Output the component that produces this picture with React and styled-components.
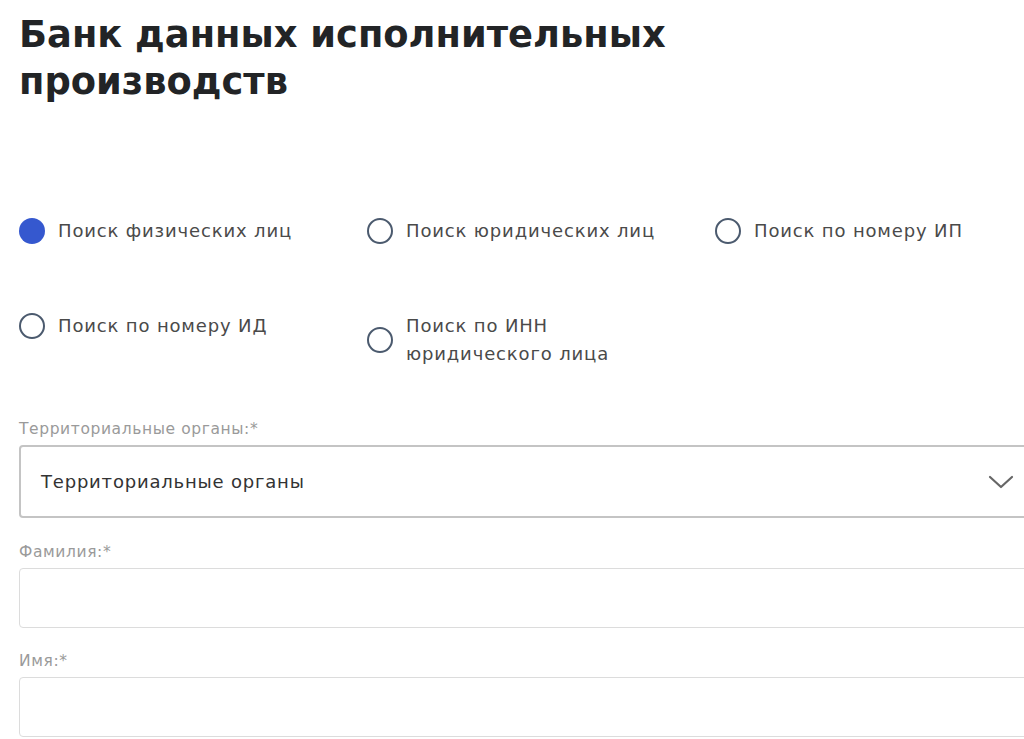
import React, { useState } from 'react';
import styled, { createGlobalStyle } from 'styled-components';

const GlobalStyle = createGlobalStyle`
  html, body {
    margin: 0;
    padding: 0;
    background: #fff;
    overflow: hidden;
  }
  body {
    font-family: "DejaVu Sans", Inter, sans-serif;
  }
`;

const Page = styled.div`
  box-sizing: border-box;
  padding: 11px 0 0 19px;
  width: 1040px;
`;

const Title = styled.h1`
  margin: 0;
  font-size: 36.8px;
  line-height: 47px;
  font-weight: 700;
  color: #222426;
`;

const Options = styled.div`
  display: grid;
  grid-template-columns: repeat(3, 348px);
  grid-auto-rows: 95px;
  margin-top: 101px;
  margin-bottom: 24px;
`;

const Option = styled.label`
  display: flex;
  align-items: center;
  gap: 13px;
  cursor: pointer;
  font-size: 18px;
  letter-spacing: 0.85px;
  line-height: ${(p) => (p.$multi ? '28px' : '29px')};
  color: #4a4a4a;
  margin-top: ${(p) => (p.$multi ? '11px' : '10px')};
  height: fit-content;
`;

const Circle = styled.span`
  flex: none;
  box-sizing: border-box;
  width: 26px;
  height: 26px;
  border-radius: 50%;
  border: ${(p) => (p.$on ? 'none' : '2px solid #4b5a6e')};
  background: ${(p) => (p.$on ? '#3558cf' : '#fff')};
`;

const Field = styled.div`
  display: flex;
  flex-direction: column;
  margin-top: ${(p) => p.$top || 0}px;
`;

const Label = styled.div`
  font-size: 15.5px;
  letter-spacing: 0.6px;
  line-height: 18px;
  color: #9a9a9a;
  margin-bottom: 7px;
`;

const SelectBox = styled.div`
  box-sizing: border-box;
  height: 73px;
  border: 2px solid #c4c4c4;
  border-radius: 4px;
  display: flex;
  align-items: center;
  justify-content: space-between;
  padding: 0 24px 0 20px;
  font-size: 18px;
  letter-spacing: 0.8px;
  color: #333;
`;

const Input = styled.input`
  box-sizing: border-box;
  height: 60px;
  border: 1.5px solid #dcdcdc;
  border-radius: 4px;
  outline: none;
  padding: 0 20px;
  font: inherit;
  font-size: 18px;
`;

const options = [
  { id: 'fl', text: 'Поиск физических лиц' },
  { id: 'ul', text: 'Поиск юридических лиц' },
  { id: 'ip', text: 'Поиск по номеру ИП' },
  { id: 'id', text: 'Поиск по номеру ИД' },
  { id: 'inn', text: ['Поиск по ИНН', 'юридического лица'] },
];

export default () => {
  const [selected, setSelected] = useState('fl');

  return (
    <Page>
      <GlobalStyle />
      <Title>
        Банк данных исполнительных
        <br />
        производств
      </Title>
      <Options>
        {options.map((o) => {
          const multi = Array.isArray(o.text);
          return (
            <Option key={o.id} $multi={multi} onClick={() => setSelected(o.id)}>
              <Circle $on={selected === o.id} />
              <span>
                {multi ? (
                  <>
                    {o.text[0]}
                    <br />
                    {o.text[1]}
                  </>
                ) : (
                  o.text
                )}
              </span>
            </Option>
          );
        })}
      </Options>
      <Field>
        <Label>Территориальные органы:*</Label>
        <SelectBox>
          <span>Территориальные органы</span>
          <svg width="26" height="16" viewBox="0 0 26 16" fill="none">
            <path d="M2 3l11 10L24 3" stroke="#666" strokeWidth="2.2" strokeLinecap="round" strokeLinejoin="round" />
          </svg>
        </SelectBox>
      </Field>
      <Field $top={25}>
        <Label>Фамилия:*</Label>
        <Input type="text" />
      </Field>
      <Field $top={24}>
        <Label>Имя:*</Label>
        <Input type="text" />
      </Field>
    </Page>
  );
};
